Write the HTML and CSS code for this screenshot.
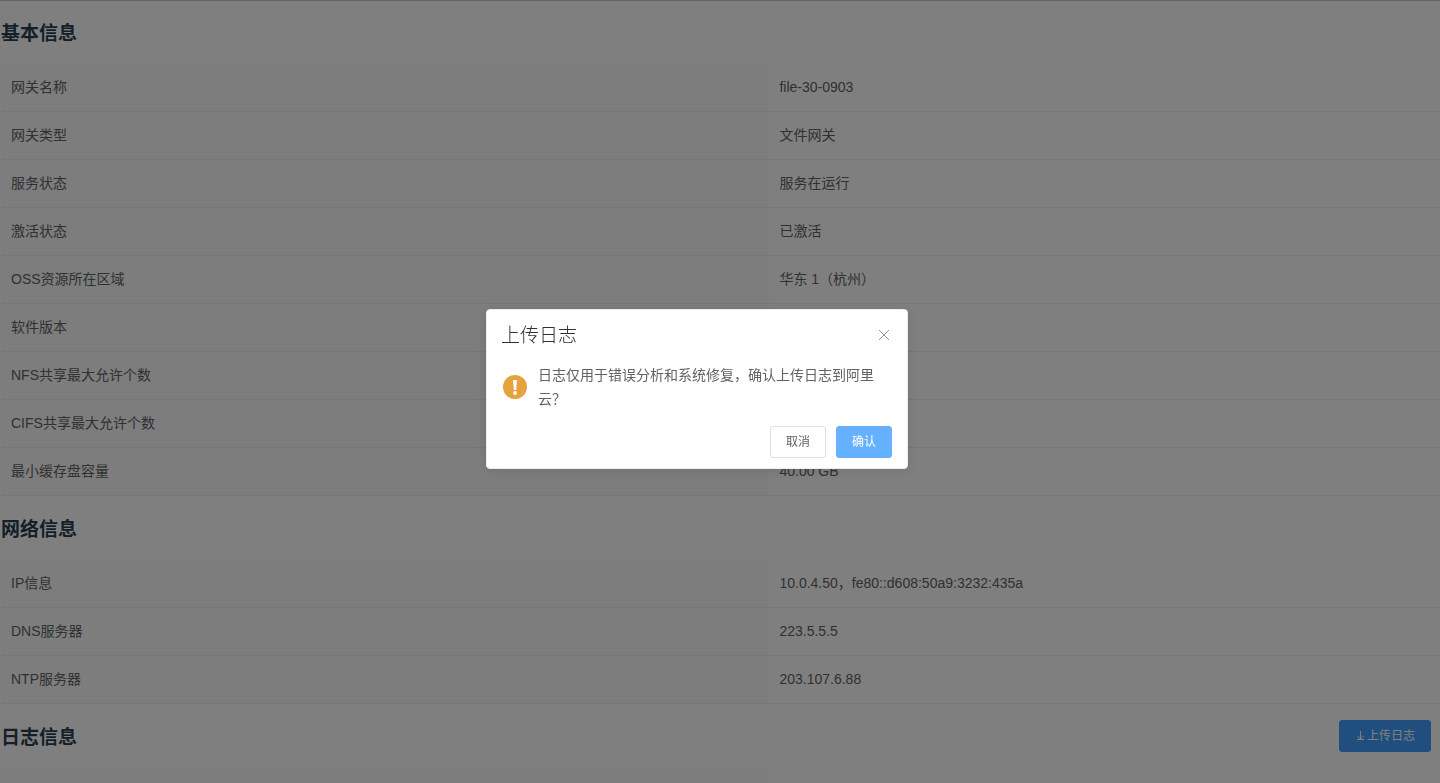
FILE: index.html
```html
<!doctype html>
<html lang="zh-CN">
    <head>
        <meta charset="utf-8">
        <meta name="viewport" content="width=device-width,initial-scale=1">
        <title>网关信息</title>
        <link rel="stylesheet" href="styles.css">
    </head>
    <body>
        <main class="page">
            <section>
                <div class="section-head top">
                    <h3>基本信息</h3>
                </div>
                <table class="info">
                    <tr><th scope="row">网关名称</th><td>file-30-0903</td></tr>
                    <tr><th scope="row">网关类型</th><td>文件网关</td></tr>
                    <tr><th scope="row">服务状态</th><td>服务在运行</td></tr>
                    <tr><th scope="row">激活状态</th><td>已激活</td></tr>
                    <tr><th scope="row">OSS资源所在区域</th><td>华东 1（杭州）</td></tr>
                    <tr><th scope="row">软件版本</th><td></td></tr>
                    <tr><th scope="row">NFS共享最大允许个数</th><td></td></tr>
                    <tr><th scope="row">CIFS共享最大允许个数</th><td></td></tr>
                    <tr><th scope="row">最小缓存盘容量</th><td>40.00 GB</td></tr>
                </table>
            </section>

            <section>
                <div class="section-head">
                    <h3>网络信息</h3>
                </div>
                <table class="info">
                    <tr><th scope="row">IP信息</th><td>10.0.4.50，fe80::d608:50a9:3232:435a</td></tr>
                    <tr><th scope="row">DNS服务器</th><td>223.5.5.5</td></tr>
                    <tr><th scope="row">NTP服务器</th><td>203.107.6.88</td></tr>
                </table>
            </section>

            <section>
                <div class="section-head">
                    <h3>日志信息</h3>
                    <button type="button" class="btn btn-primary">
                        <svg class="btn-icon" viewBox="0 0 12 12" aria-hidden="true">
                            <path d="M5.5 1v8M2.5 6l3 3 3-3M2 9.500h7"/>
                        </svg>上传日志
                    </button>
                </div>
                <table class="info">
                    <tr><th scope="row"></th><td></td></tr>
                </table>
            </section>
        </main>

        <div class="overlay">
            <div class="dialog" role="dialog" aria-modal="true" aria-labelledby="dialog-title">
                <div class="dialog-head">
                    <h2 id="dialog-title">上传日志</h2>
                    <button type="button" class="close" aria-label="关闭">
                        <svg viewBox="0 0 16 16" aria-hidden="true">
                            <path d="M3 3l10 10M13 3L3 13"/>
                        </svg>
                    </button>
                </div>
                <div class="dialog-body">
                    <svg class="warning" viewBox="0 0 24 24" aria-hidden="true">
                        <circle cx="12" cy="12" r="12" fill="#e6a23c"/>
                        <path d="M10 5h4l-.8 10h-2.400z" fill="#fff"/>
                        <circle cx="12" cy="18" r="2" fill="#fff"/>
                    </svg>
                    <p>日志仅用于错误分析和系统修复，确认上传日志到阿里云？</p>
                </div>
                <div class="dialog-foot">
                    <button type="button" class="btn">取消</button>
                    <button type="button" class="btn btn-primary btn-focus">确认</button>
                </div>
            </div>
        </div>
    </body>
</html>
```
FILE: styles.css
```css
* {
    box-sizing: border-box;
}
html, body {
    margin: 0;
    height: 100%;
}
body {
    overflow: hidden;
    background: #fff;
    color: #606266;
    font-family: "Liberation Sans", "Noto Sans CJK SC", sans-serif;
    font-size: 14px;
}
.section-head {
    display: flex;
    align-items: center;
    justify-content: space-between;
    height: 64px;
    padding: 0 9px 0 1px;
}
.section-head.top {
    border-top: 1px solid #c8c8c8;
}
h3 {
    margin: 0;
    padding-bottom: 2px;
    color: #2c3e50;
    font-size: 19px;
    font-weight: bold;
}
.info {
    width: 100%;
    padding-left: 1px;
    table-layout: fixed;
    border-collapse: separate;
    border-spacing: 0;
}
.info th,
.info td {
    height: 48px;
    padding: 0 10px;
    border-bottom: 1px solid #ebeef5;
    line-height: 23px;
    text-align: left;
    font-weight: normal;
}
.info th {
    width: 53.4%;
    background: #fafafa;
}

/* buttons */
.btn {
    display: inline-flex;
    align-items: center;
    height: 32px;
    padding: 0 15px;
    border: 1px solid #dcdfe6;
    border-radius: 3px;
    background: #fff;
    color: #606266;
    font-family: inherit;
    font-size: 12px;
    line-height: 12px;
    cursor: pointer;
}
.btn-primary {
    border-color: #409eff;
    background: #409eff;
    color: #fff;
}
.btn-focus {
    border-color: #66b1ff;
    background: #66b1ff;
}
.btn-icon {
    width: 12px;
    height: 12px;
    fill: none;
    stroke: currentColor;
}

/* message box */
.overlay {
    position: fixed;
    inset: 0;
    display: flex;
    align-items: center;
    justify-content: center;
    padding: 0 46px 5px 0;
    background: rgba(0, 0, 0, 0.5);
}
.dialog {
    width: 422px;
    padding-bottom: 10px;
    border: 1px solid #ebeef5;
    border-radius: 4px;
    background: #fff;
    box-shadow: 0 2px 12px rgba(0, 0, 0, 0.1);
}
.dialog-head {
    display: flex;
    align-items: center;
    justify-content: space-between;
    padding: 16px 15px 7px 14px;
}
.dialog-head h2 {
    margin: 0;
    color: #303133;
    font-size: 19px;
    font-weight: 300;
    line-height: 20px;
}
.close {
    width: 16px;
    height: 16px;
    padding: 0;
    border: 0;
    background: none;
    color: #909399;
    cursor: pointer;
}
.close svg {
    display: block;
    margin-top: -2px;
    fill: none;
    stroke: currentColor;
}
.dialog-body {
    display: flex;
    align-items: center;
    gap: 11px;
    padding: 10px 16px;
}
.dialog-body p {
    margin: 0;
    line-height: 24px;
}
.warning {
    flex: none;
    width: 24px;
    height: 24px;
}
.dialog-foot {
    display: flex;
    justify-content: flex-end;
    gap: 10px;
    padding: 5px 15px 0;
}
```
